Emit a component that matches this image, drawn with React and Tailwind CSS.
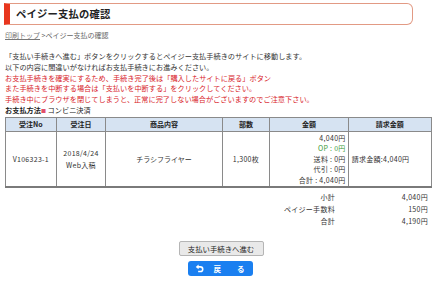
import React from "react";

const font = { fontFamily: '"Noto Sans CJK JP", "Noto Sans", sans-serif' };

export default function App() {
  const th = "border border-[#8a8a8a] bg-[#d6e3f2] font-bold text-center text-[7px] leading-[13px] text-[#222]";
  const td = "border border-[#8a8a8a] text-[7px] text-[#333] align-middle";
  return (
    <div className="w-[440px] h-[284px] bg-white overflow-hidden text-[#333] flex flex-col" style={font}>
      <div className="mt-[3px] ml-[4px] w-[409px] h-[22px] border border-[#e29a84] border-l-[6px] border-l-[#e8361e] rounded-r-[6px] flex items-center pl-[6px]">
        <span className="text-[10.3px] font-bold text-[#222] leading-none tracking-[0.2px]">ペイジー支払の確認</span>
      </div>
      <div className="mt-[5px] ml-[5px] h-[10px] leading-[10px] text-[7px] text-[#666]">
        <span className="underline text-[#777]">印刷トップ</span>
        <span> &gt;ペイジー支払の確認</span>
      </div>
      <div className="mt-[11px] ml-[5px] text-[7.2px] leading-[10.8px]">
        <div className="text-[#333]">「支払い手続きへ進む」ボタンをクリックするとペイジー支払手続きのサイトに移動します。</div>
        <div className="text-[#333]">以下の内容に間違いがなければお支払手続きにお進みください。</div>
        <div className="text-[#d8232a]">お支払手続きを確実にするため、手続き完了後は「購入したサイトに戻る」ボタン</div>
        <div className="text-[#d8232a]">また手続きを中断する場合は「支払いを中断する」をクリックしてください。</div>
        <div className="text-[#d8232a]">手続き中にブラウザを閉じてしまうと、正常に完了しない場合がございますのでご注意下さい。</div>
        <div className="text-[#222]">
          <span className="font-bold">お支払方法</span>
          <span className="text-[#e0506a] text-[5px] align-top">■</span>
          <span> コンビニ決済</span>
        </div>
      </div>
      <table className="mt-[1.5px] ml-[5px] w-[426px] border-collapse border-t-[1.5px] border-b-[2px] border-[#7a7a7a] table-fixed">
        <colgroup>
          <col className="w-[50.7px]" />
          <col className="w-[49.6px]" />
          <col className="w-[116.4px]" />
          <col className="w-[47.6px]" />
          <col className="w-[78.4px]" />
          <col className="w-[83.3px]" />
        </colgroup>
        <thead>
          <tr className="h-[14px]">
            <th className={th}>受注No</th>
            <th className={th}>受注日</th>
            <th className={th}>商品内容</th>
            <th className={th}>部数</th>
            <th className={th}>金額</th>
            <th className={th}>請求金額</th>
          </tr>
        </thead>
        <tbody>
          <tr className="h-[55px]">
            <td className={td + " text-center tracking-[0.3px]"}>V106323-1</td>
            <td className={td + " text-center leading-[12.4px] tracking-[0.3px]"}>
              <div>2018/4/24</div>
              <div>Web入稿</div>
            </td>
            <td className={td + " text-center text-[7.5px]"}>チラシフライヤー</td>
            <td className={td + " text-center tracking-[0.3px]"}>1,300枚</td>
            <td className={td + " text-right pr-[2px] leading-[10.4px] tracking-[0.3px]"}>
              <div>4,040円</div>
              <div className="text-[#3a9a3a]">OP : 0円</div>
              <div>送料 : 0円</div>
              <div>代引 : 0円</div>
              <div>合計 : 4,040円</div>
            </td>
            <td className={td + " text-left pl-[3px] tracking-[0.3px]"}>請求金額:4,040円</td>
          </tr>
        </tbody>
      </table>
      <div className="mt-[3px] grid grid-cols-[335px_93px] text-[7px] leading-[12px] text-[#333] tracking-[0.3px]">
        <div className="text-right">小計</div>
        <div className="text-right">4,040円</div>
        <div className="text-right">ペイジー手数料</div>
        <div className="text-right">150円</div>
        <div className="text-right">合計</div>
        <div className="text-right">4,190円</div>
      </div>
      <div className="flex flex-col items-center mt-[14px]">
        <div className="ml-[2px] w-[85px] h-[15px] bg-[#e9e9e9] border border-[#b5b5b5] rounded-[2px] flex items-center justify-center text-[7.4px] text-[#222]">
          支払い手続きへ進む
        </div>
        <div className="mt-[5.5px] w-[65px] h-[15px] bg-[#1a7ff0] rounded-[3px] flex items-center pl-[7px] text-white">
          <svg width="9" height="9" viewBox="0 0 10 10">
            <path d="M3.2 3.2 H6 A2.6 2.6 0 0 1 6 8.4 H3.5" fill="none" stroke="white" strokeWidth="1.7" />
            <path d="M0.8 3.2 L4 0.6 L4 5.8 Z" fill="white" />
          </svg>
          <span className="ml-[10px] text-[7.5px] font-bold leading-none">戻</span>
          <span className="ml-[16px] text-[7.5px] font-bold leading-none">る</span>
        </div>
      </div>
    </div>
  );
}
